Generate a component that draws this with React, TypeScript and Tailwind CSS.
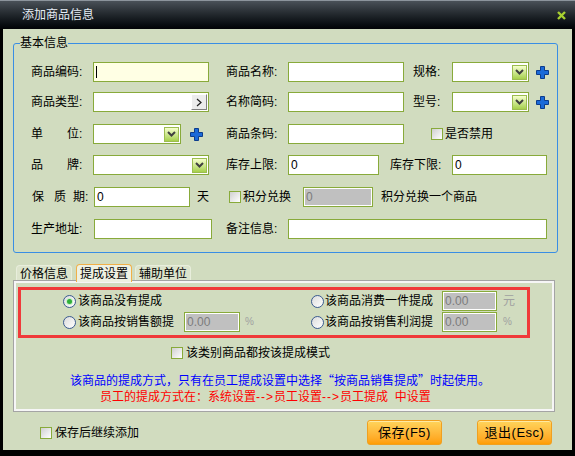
import React from 'react';

const Label = ({ w, children }: { w: string; children: React.ReactNode }) => (
    <div className={`${w} shrink-0 flex items-center whitespace-nowrap`}>{children}</div>
);

const TextInput = ({ w, value = '', yellow = false, disabled = false }: { w: string; value?: string; yellow?: boolean; disabled?: boolean }) => (
    <div
        className={`${w} h-[20px] shrink-0 border border-[#88aa3a] flex items-center pl-[2px] ${
            disabled ? 'bg-[#c0c0c0] shadow-[inset_0_0_0_1px_#ffffff] text-[#7c7c7c]' : yellow ? 'bg-[#ffffe4]' : 'bg-white'
        }`}
    >
        {yellow && <div className="w-px h-[12px] bg-black" />}
        {value && <span className="leading-[14px]">{value}</span>}
    </div>
);

const Arrow = () => (
    <div className="w-[15px] h-[15px] mr-px border border-[#9cbc50] bg-gradient-to-b from-[#f6ffcc] to-[#a6d048] flex items-center justify-center">
        <svg width="9" height="6" viewBox="0 0 9 6">
            <path d="M1 1 L4.5 4.5 L8 1" fill="none" stroke="#404040" strokeWidth="2" />
        </svg>
    </div>
);

const Select = ({ w }: { w: string }) => (
    <div className={`${w} h-[20px] shrink-0 border border-[#88aa3a] bg-white flex items-center justify-end`}>
        <Arrow />
    </div>
);

const Plus = () => (
    <svg width="13" height="13" viewBox="0 0 13 13" className="shrink-0">
        <path d="M4.5 0.5 H8.5 V4.5 H12.5 V8.5 H8.5 V12.5 H4.5 V8.5 H0.5 V4.5 H4.5 Z" fill="#1a6ad8" stroke="#0c3c8c" strokeWidth="1" />
    </svg>
);

const Check = () => (
    <div className="w-[12px] h-[12px] shrink-0 border border-[#88aa3a] bg-gradient-to-br from-[#d0d0d0] to-white" />
);

const Radio = ({ on = false }: { on?: boolean }) => (
    <div className="w-[13px] h-[13px] shrink-0 rounded-full border border-[#3a5a90] bg-gradient-to-br from-[#dcdcdc] to-white flex items-center justify-center">
        {on && <div className="w-[5px] h-[5px] rounded-full bg-[#2fae3a] shadow-[0_0_0_1px_#c8f0c8]" />}
    </div>
);

const Tab = ({ active = false, children }: { active?: boolean; children: React.ReactNode }) => (
    <div
        className={`px-[3px] rounded-t-[4px] leading-[14px] ${
            active
                ? 'h-[18px] -mb-[2px] ml-[4px] mr-[3px] pt-[2px] border border-b-0 border-[#f0b048] bg-[#eef1e2] relative'
                : 'h-[15px] pt-[1px] bg-[#dce4cc] border border-b-0 border-[#e8eedc]'
        }`}
    >
        {children}
    </div>
);

const Button = ({ children }: { children: React.ReactNode }) => (
    <div className="w-[75px] h-[25px] rounded-[3px] border border-[#f0a020] bg-gradient-to-b from-[#ffd45a] to-[#ff9e00] shadow-[inset_0_1px_0_#ffe9a0] flex items-center justify-center text-[13px] tracking-[0.5px]">
        {children}
    </div>
);

export default function App() {
    return (
        <div className="w-[575px] h-[456px] bg-black flex flex-col text-[12px] leading-[14px] text-black font-['Liberation_Sans','Noto_Sans_CJK_SC',sans-serif]">
            {/* title bar */}
            <div className="h-[29px] shrink-0 border-t border-[#8c949c] bg-gradient-to-b from-[#4a5158] to-[#020406] flex items-center justify-between pl-[22px] pr-[9px]">
                <span className="text-[#e6eef6] text-[12px]">添加商品信息</span>
                <svg width="9" height="9" viewBox="0 0 9 9">
                    <path d="M1 1 L8 8 M8 1 L1 8" stroke="#a8d030" strokeWidth="2.4" />
                </svg>
            </div>

            <div className="flex-1 mx-[3px] mb-[6px] bg-[#d1dcbf] flex flex-col">
                {/* 基本信息 */}
                <div className="relative mt-[14px] ml-[10px] w-[545px] border border-[#3a8ee4] rounded-[3px] pt-[18px] pb-[13px] pl-[17px] flex flex-col">
                    <span className="absolute -top-[8px] left-[6px] bg-[#d1dcbf] leading-[14px]">基本信息</span>

                    <div className="flex items-center h-[20px]">
                        <Label w="w-[62px]">商品编码:</Label>
                        <TextInput w="w-[116px]" yellow />
                        <div className="ml-[17px]" />
                        <Label w="w-[62px]">商品名称:</Label>
                        <TextInput w="w-[116px]" />
                        <div className="ml-[9px]" />
                        <Label w="w-[39px]">规格:</Label>
                        <Select w="w-[77px]" />
                        <div className="ml-[7px]" />
                        <Plus />
                    </div>

                    <div className="flex items-center h-[20px] mt-[10px]">
                        <Label w="w-[62px]">商品类型:</Label>
                        <div className="w-[116px] h-[20px] shrink-0 border border-[#88aa3a] bg-white flex items-center justify-end">
                            <div className="w-[16px] h-[16px] mr-px bg-[#ececec] border border-t-white border-l-white border-r-[#808080] border-b-[#808080] flex items-center justify-center">
                                <svg width="6" height="9" viewBox="0 0 6 9">
                                    <path d="M1 1 L5 4.5 L1 8" fill="none" stroke="#202020" strokeWidth="1.2" />
                                </svg>
                            </div>
                        </div>
                        <div className="ml-[17px]" />
                        <Label w="w-[62px]">名称简码:</Label>
                        <TextInput w="w-[116px]" />
                        <div className="ml-[9px]" />
                        <Label w="w-[39px]">型号:</Label>
                        <Select w="w-[77px]" />
                        <div className="ml-[7px]" />
                        <Plus />
                    </div>

                    <div className="flex items-center h-[20px] mt-[12px]">
                        <Label w="w-[62px]">
                            <span>单</span>
                            <span className="ml-[24px]">位:</span>
                        </Label>
                        <Select w="w-[88px]" />
                        <div className="ml-[9px]" />
                        <Plus />
                        <div className="ml-[23px]" />
                        <Label w="w-[62px]">商品条码:</Label>
                        <TextInput w="w-[116px]" />
                        <div className="ml-[27px]" />
                        <Check />
                        <span className="ml-[2px]">是否禁用</span>
                    </div>

                    <div className="flex items-center h-[20px] mt-[11px]">
                        <Label w="w-[62px]">
                            <span>品</span>
                            <span className="ml-[24px]">牌:</span>
                        </Label>
                        <Select w="w-[116px]" />
                        <div className="ml-[17px]" />
                        <Label w="w-[62px]">库存上限:</Label>
                        <TextInput w="w-[91px]" value="0" />
                        <div className="ml-[11px]" />
                        <Label w="w-[62px]">库存下限:</Label>
                        <TextInput w="w-[95px]" value="0" />
                    </div>

                    <div className="flex items-center h-[20px] mt-[12px]">
                        <Label w="w-[63px]">
                            <span className="ml-px">保</span>
                            <span className="ml-[10px]">质</span>
                            <span className="ml-[7px]">期:</span>
                        </Label>
                        <TextInput w="w-[96px]" value="0" />
                        <span className="ml-[7px]">天</span>
                        <div className="ml-[20px]" />
                        <Check />
                        <span className="ml-[2px]">积分兑换</span>
                        <div className="ml-[12px]" />
                        <TextInput w="w-[70px]" value="0" disabled />
                        <span className="ml-[8px]">积分兑换一个商品</span>
                    </div>

                    <div className="flex items-center h-[20px] mt-[12px]">
                        <Label w="w-[63px]">生产地址:</Label>
                        <TextInput w="w-[118px]" />
                        <div className="ml-[14px]" />
                        <Label w="w-[62px]">备注信息:</Label>
                        <TextInput w="w-[259px]" />
                    </div>
                </div>

                {/* tabs */}
                <div className="mt-[11px] ml-[13px] flex items-end relative z-10">
                    <Tab>价格信息</Tab>
                    <Tab active>提成设置</Tab>
                    <Tab>辅助单位</Tab>
                </div>

                <div className="ml-[10px] w-[542px] h-[132px] border border-[#a4a4a4] shadow-[inset_0_0_0_2px_#f6f6f6] flex flex-col">
                    <div className="mt-[6px] ml-[4px] w-[512px] h-[51px] border-[3px] border-[#f03a3a] pt-px flex flex-col gap-px">
                        <div className="flex h-[20px] items-center">
                            <div className="w-[290px] pl-[42px] flex items-center">
                                <Radio on />
                                <span className="ml-[2px]">该商品没有提成</span>
                            </div>
                            <div className="flex items-center">
                                <Radio />
                                <span className="ml-px w-[117px]">该商品消费一件提成</span>
                                <TextInput w="w-[55px]" value="0.00" disabled />
                                <span className="ml-[6px] text-[#a0a0a0]">元</span>
                            </div>
                        </div>
                        <div className="flex h-[20px] items-center">
                            <div className="w-[290px] pl-[42px] flex items-center">
                                <Radio />
                                <span className="ml-[2px] w-[106px]">该商品按销售额提</span>
                                <TextInput w="w-[56px]" value="0.00" disabled />
                                <span className="ml-[5px] text-[#a0a0a0] text-[10px]">%</span>
                            </div>
                            <div className="flex items-center">
                                <Radio />
                                <span className="ml-px w-[117px]">该商品按销售利润提</span>
                                <TextInput w="w-[55px]" value="0.00" disabled />
                                <span className="ml-[6px] text-[#a0a0a0] text-[10px]">%</span>
                            </div>
                        </div>
                    </div>

                    <div className="mt-[8px] ml-[157px] flex items-center">
                        <Check />
                        <span className="ml-[3px]">该类别商品都按该提成模式</span>
                    </div>

                    <div className="mt-[13px] ml-[56px] text-[#0000ff] whitespace-nowrap">
                        该商品的提成方式，只有在员工提成设置中选择
                        <span className="font-['Noto_Sans_CJK_SC',sans-serif]">“按商品销售提成”</span>
                        时起使用。
                    </div>
                    <div className="mt-[2px] ml-[86px] text-[#ff0000] whitespace-nowrap">
                        员工的提成方式在：系统设置<span className="tracking-[1px]">--&gt;</span>员工设置<span className="tracking-[1px]">--&gt;</span>员工提成&nbsp;&nbsp;中设置
                    </div>
                </div>

                {/* bottom */}
                <div className="mt-[8px] flex items-center">
                    <div className="ml-[37px] flex items-center">
                        <Check />
                        <span className="ml-[3px]">保存后继续添加</span>
                    </div>
                    <div className="ml-auto mr-[20px] flex gap-[35px]">
                        <Button>保存(F5)</Button>
                        <Button>退出(Esc)</Button>
                    </div>
                </div>
            </div>
        </div>
    );
}
